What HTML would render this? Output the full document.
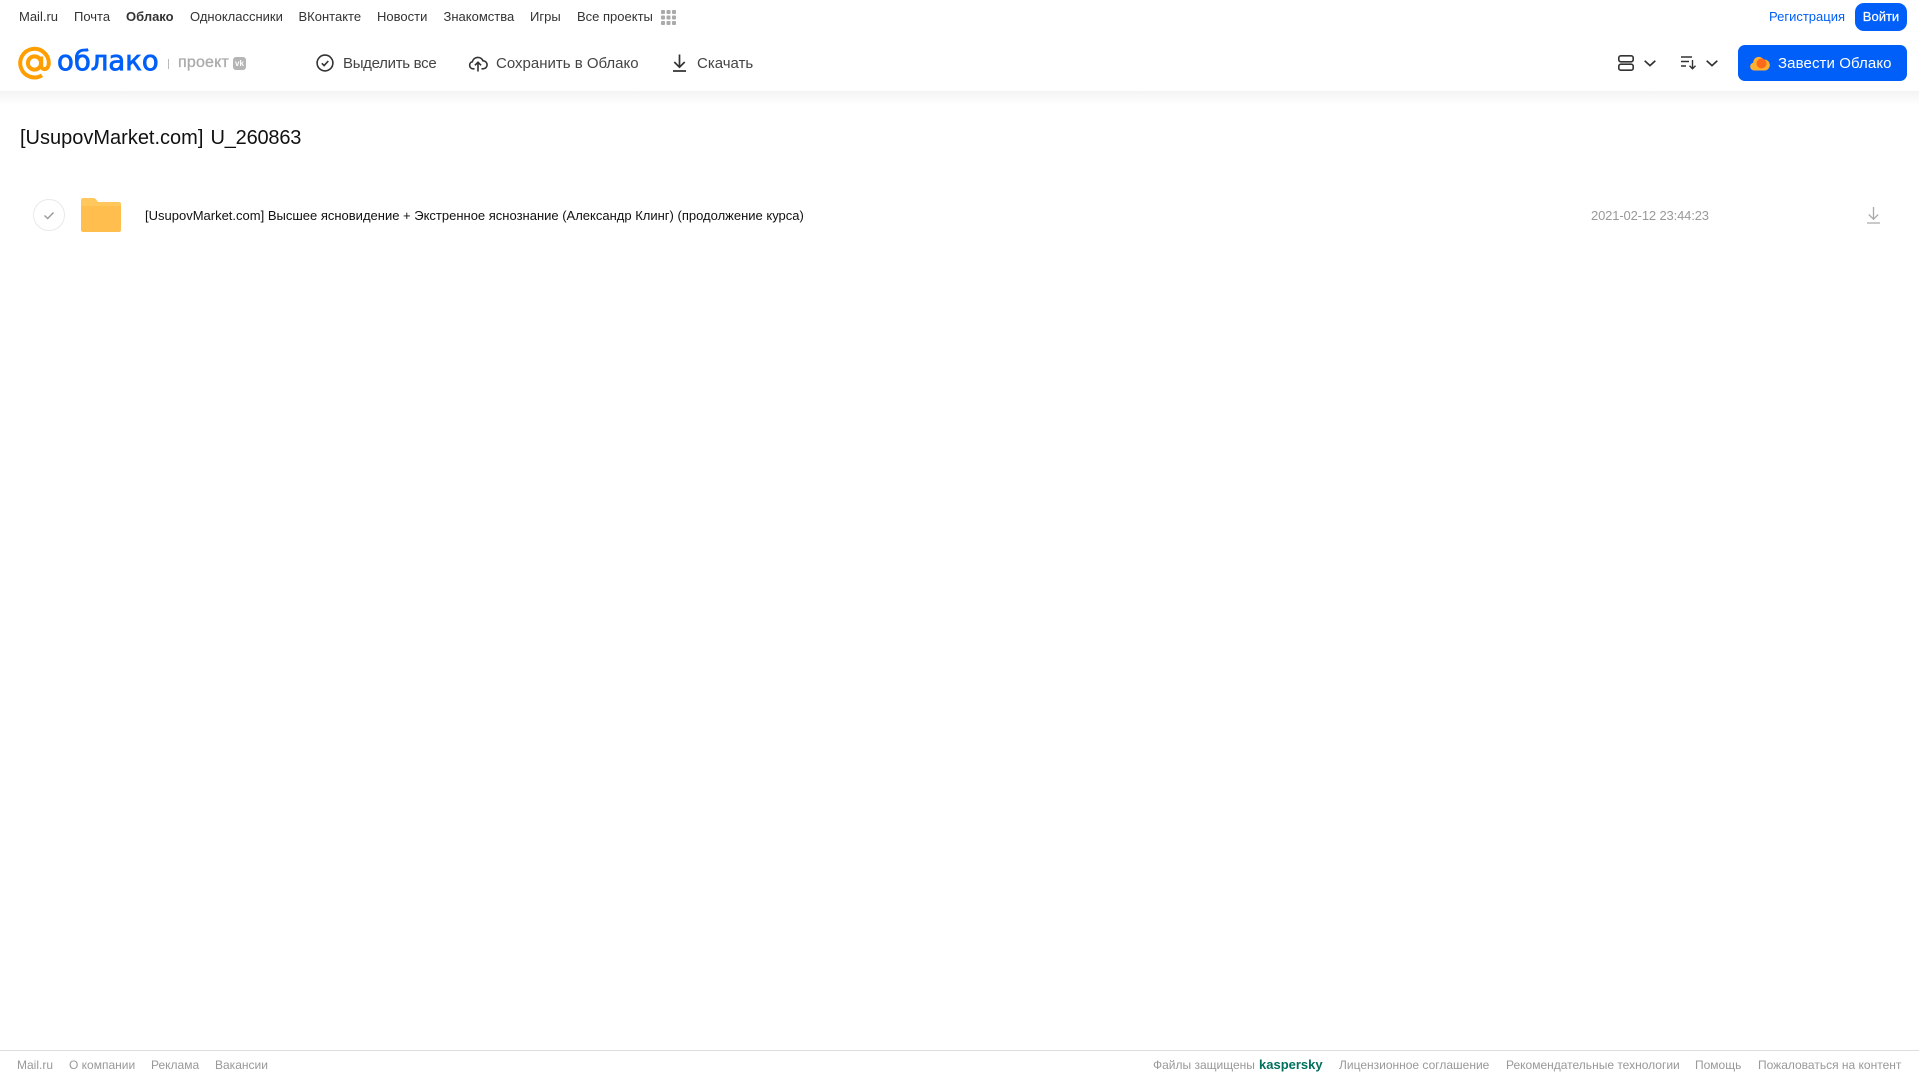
<!DOCTYPE html>
<html lang="ru"><head><meta charset="utf-8"><title>Облако</title>
<style>
html,body{margin:0;padding:0;background:#fff}
body{width:1919px;height:1079px;position:relative;overflow:hidden;font-family:"Liberation Sans",Arial,sans-serif}
.t{position:absolute;white-space:nowrap;line-height:20px}
.n{top:7px;font-size:13px;color:#333}
.b{top:53px;font-size:15px;color:#444;line-height:21px}
.f{top:1055px;font-size:12px;color:#999}
svg{position:absolute;overflow:visible}
#sh{position:absolute;left:0;top:91px;width:1919px;height:14px;background:linear-gradient(#f4f4f4,#fff)}
</style></head><body>
<div id="sh"></div>
<span class="t n" style="left:19px">Mail.ru</span>
<span class="t n" style="left:74px">Почта</span>
<span class="t n" style="left:126px;font-weight:700">Облако</span>
<span class="t n" style="left:190px">Одноклассники</span>
<span class="t n" style="left:298.500px">ВКонтакте</span>
<span class="t n" style="left:377px">Новости</span>
<span class="t n" style="left:443.500px">Знакомства</span>
<span class="t n" style="left:530px">Игры</span>
<span class="t n" style="left:577px">Все проекты</span>
<svg style="left:661px;top:10px" width="15" height="15" fill="#aaa"><rect x="0" y="0" width="4" height="4" rx="1"/><rect x="5.5" y="0" width="4" height="4" rx="1"/><rect x="11" y="0" width="4" height="4" rx="1"/><rect x="0" y="5.5" width="4" height="4" rx="1"/><rect x="5.5" y="5.5" width="4" height="4" rx="1"/><rect x="11" y="5.5" width="4" height="4" rx="1"/><rect x="0" y="11" width="4" height="4" rx="1"/><rect x="5.5" y="11" width="4" height="4" rx="1"/><rect x="11" y="11" width="4" height="4" rx="1"/></svg>
<span class="t n" style="left:1769px;color:#005ff9">Регистрация</span>
<div style="position:absolute;left:1855px;top:3px;width:52px;height:28px;background:#005ff9;border-radius:9px;color:#fff;font-size:13px;font-weight:400;text-align:center;line-height:28px;-webkit-text-stroke:.2px #fff">Войти</div>

<svg style="left:18px;top:47px" width="33" height="33" viewBox="0 0 33 33" fill="none" stroke="#ff9e00" stroke-width="4"><circle cx="16.5" cy="16" r="6.6"/><path d="M23.2 9.5V18.5c0 5.2 7.6 5 7.6-2.5A14.3 14.3 0 1 0 24 28.3"/></svg>
<span class="t" style="left:57px;top:43px;line-height:36px;font-size:27.500px;color:#005ff9;font-family:'DejaVu Sans',sans-serif;-webkit-text-stroke:.8px #005ff9">облако</span>
<div style="position:absolute;left:168px;top:59px;width:1px;height:10px;background:#bbb"></div>
<span class="t" style="left:178px;top:53px;font-size:16px;color:#aaa;letter-spacing:.2px;-webkit-text-stroke:.3px #aaa">проект</span>
<div style="position:absolute;left:233px;top:57px;width:13px;height:13px;background:#b5b5b5;border-radius:3px;color:#fff;font-size:8px;font-weight:700;line-height:13px;text-align:center">vk</div>

<svg style="left:316px;top:54px" width="18" height="18" viewBox="0 0 18 18" fill="none" stroke="#333" stroke-width="1.6"><circle cx="9" cy="9" r="7.9"/><path d="M5.8 9.3l2.3 2.3 4.2-4.6"/></svg>
<span class="t b" style="left:343px;letter-spacing:-.3px">Выделить все</span>
<svg style="left:469px;top:54px" width="18" height="18" viewBox="0 0 18 18" fill="none" stroke="#333" stroke-width="1.6"><path d="M5.500 14.800H4.200A3.600 3.600 0 0 1 3.400 7.700 5.600 5.600 0 0 1 14 6.800a4 4 0 0 1 .2 8H12.500"/><path d="M9 17.500V8.500M5.900 11.300L9 8.200l3.100 3.100"/></svg>
<span class="t b" style="left:496px">Сохранить в Облако</span>
<svg style="left:672px;top:54px" width="15" height="18" viewBox="0 0 15 18" fill="none" stroke="#333" stroke-width="1.7"><path d="M7.500 0.500V13M2.300 8l5.200 5.200L12.700 8M1 17h13"/></svg>
<span class="t b" style="left:697px">Скачать</span>

<svg style="left:1618px;top:55px" width="16" height="16" viewBox="0 0 16 16" fill="none" stroke="#333" stroke-width="1.6"><rect x=".8" y=".8" width="14.4" height="6" rx="2"/><rect x=".8" y="9.2" width="14.4" height="6" rx="2"/></svg>
<svg style="left:1644px;top:60px" width="12" height="7" fill="none" stroke="#333" stroke-width="1.7"><path d="M.7 .8L6 5.600 11.300 .8"/></svg>
<svg style="left:1681px;top:56px" width="16" height="14" viewBox="0 0 16 14" fill="none" stroke="#333" stroke-width="1.4"><path d="M0 1h11M0 5.500h8M0 10h5M11.500 4v8.500M8.500 9.800l3 3 3-3"/></svg>
<svg style="left:1706px;top:60px" width="12" height="7" fill="none" stroke="#333" stroke-width="1.7"><path d="M.7 .8L6 5.600 11.300 .8"/></svg>
<div style="position:absolute;left:1738px;top:45px;width:169px;height:36px;background:#005ff9;border-radius:7px"></div>
<svg style="left:1750px;top:54px" width="20" height="17" viewBox="0 0 20 17"><path fill="#ffb02e" d="M4 16.500A4 4 0 0 1 3.300 8.600 5.500 5.500 0 0 1 13.500 5.500 5.500 5.500 0 0 1 15 16.500z"/><circle cx="11.500" cy="9.500" r="5" fill="#ff6a1a"/></svg>
<span class="t" style="left:1778px;top:53.500px;font-size:15px;color:#fff;letter-spacing:.1px">Завести Облако</span>

<span class="t" style="left:20px;top:125px;line-height:26px;font-size:20px;color:#111">[UsupovMarket.com]</span>
<span class="t" style="left:210.500px;top:125px;line-height:26px;font-size:20px;color:#111;letter-spacing:-.2px">U_260863</span>

<svg style="left:33px;top:199px" width="32" height="32" fill="none"><circle cx="16" cy="16" r="15.500" stroke="#e9e9e9"/><path d="M11.500 16.500l3.200 3 5.800-6" stroke="#999" stroke-width="1.400"/></svg>
<svg style="left:81px;top:198px" width="40" height="34" viewBox="0 0 40 34"><path fill="#ffc75c" d="M2 0h10c1.500 0 2.500.6 3.400 1.800L17 4h21c1.100 0 2 .9 2 2v5H0V2C0 .9.900 0 2 0z"/><path fill="#ffbe4d" d="M0 8h40v24c0 1.100-.9 2-2 2H2c-1.100 0-2-.9-2-2z"/></svg>
<span class="t" style="left:145px;top:206px;font-size:13px;color:#111">[UsupovMarket.com] Высшее ясновидение + Экстренное яснознание (Александр Клинг) (продолжение курса)</span>
<span class="t" style="left:1591px;top:206px;font-size:13px;color:#999;letter-spacing:-.15px">2021-02-12 23:44:23</span>
<svg style="left:1867px;top:207px" width="13" height="17" viewBox="0 0 13 17" fill="none" stroke="#aaa" stroke-width="1.300"><path d="M6.500 0V12M1.800 7.500l4.700 4.700 4.700-4.700M0 16h13"/></svg>

<div style="position:absolute;left:0;top:1050px;width:1919px;height:1px;background:#ddd"></div>
<span class="t f" style="left:17px">Mail.ru</span>
<span class="t f" style="left:69px">О компании</span>
<span class="t f" style="left:151px">Реклама</span>
<span class="t f" style="left:215px">Вакансии</span>
<span class="t f" style="left:1153px">Файлы защищены</span>
<span class="t f" style="left:1259px;color:#00705d;font-weight:700;font-size:13px">kaspersky</span>
<span class="t f" style="left:1339px">Лицензионное соглашение</span>
<span class="t f" style="left:1506px">Рекомендательные технологии</span>
<span class="t f" style="left:1695px">Помощь</span>
<span class="t f" style="left:1758px">Пожаловаться на контент</span>
</body></html>
